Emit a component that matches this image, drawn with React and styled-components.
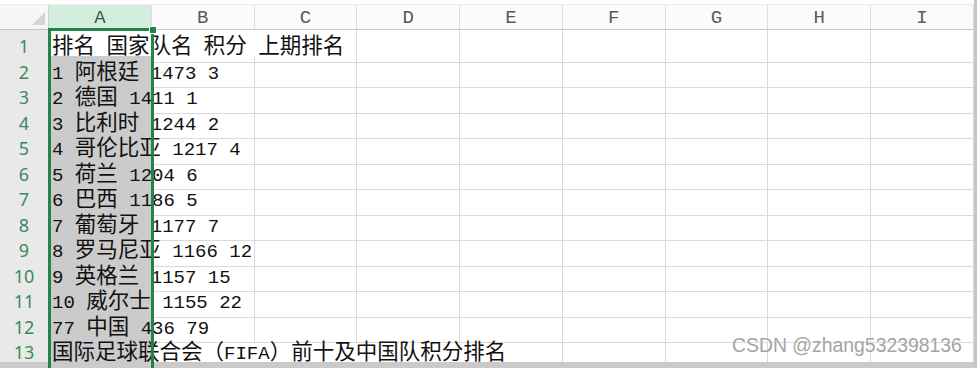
import React from "react";
import styled, { createGlobalStyle } from "styled-components";

const GlobalStyle = createGlobalStyle`
  html, body { margin: 0; padding: 0; background: #fff; }
  body { overflow: hidden; }
`;

const COLS = ["A", "B", "C", "D", "E", "F", "G", "H", "I"];
const ROW_H = 25.5;

const rows = [
  { text: "排名 国家队名 积分 上期排名", covered: ["B"] },
  { text: "1 阿根廷 1473 3" },
  { text: "2 德国 1411 1" },
  { text: "3 比利时 1244 2" },
  { text: "4 哥伦比亚 1217 4" },
  { text: "5 荷兰 1204 6" },
  { text: "6 巴西 1186 5" },
  { text: "7 葡萄牙 1177 7" },
  { text: "8 罗马尼亚 1166 12" },
  { text: "9 英格兰 1157 15" },
  { text: "10 威尔士 1155 22" },
  { text: "77 中国 436 79" },
  { text: "国际足球联合会（FIFA）前十及中国队积分排名", covered: ["B", "C", "D"] },
];

const Sheet = styled.div`
  position: relative;
  width: 977px;
  height: 368px;
  overflow: hidden;
  display: flex;
  background: #fff;
`;

const Main = styled.div`
  width: 974px;
  display: flex;
  flex-direction: column;
`;

const RightEdge = styled.div`
  width: 3px;
  background: #c6c6c6;
`;

const TopGap = styled.div`
  height: 5px;
  box-sizing: border-box;
  border-bottom: 1px solid #ececec;
  background: #fff;
`;

const GridRow = styled.div`
  display: grid;
  grid-template-columns: 49px repeat(9, 102.75px);
  height: ${(p) => p.$h}px;
  flex: none;
`;

const Corner = styled.div`
  box-sizing: border-box;
  background: #f6f6f6;
  border-right: 1px solid #d4d4d4;
  border-bottom: 1px solid #c4c4c4;
  display: flex;
  align-items: flex-end;
  justify-content: flex-end;
  padding: 0 3px 4px 0;
`;

const ColHead = styled.div`
  box-sizing: border-box;
  background: ${(p) => (p.$active ? "#d4eedd" : "#fbfbfb")};
  border-right: 1px solid #dcdcdc;
  border-bottom: 1px solid #c4c4c4;
  display: flex;
  align-items: center;
  justify-content: center;
  font-family: "Liberation Mono", "Courier New", monospace;
  font-size: 19px;
  color: ${(p) => (p.$active ? "#3d5a48" : "#5a5a5a")};
  padding-top: 2px;
`;

const RowHead = styled.div`
  box-sizing: border-box;
  background: #e9e9e9;
  border-right: 1px solid #c8c8c8;
  border-bottom: 1px solid #d2d2d2;
  display: flex;
  align-items: center;
  justify-content: center;
  font-family: "Noto Sans", "Open Sans", sans-serif;
  font-size: 18px;
  color: #3b8a5f;
  padding-top: 1px;
`;

const Cell = styled.div`
  box-sizing: border-box;
  background: ${(p) => p.$bg || "transparent"};
  border-right: 1px solid ${(p) => (p.$covered ? "transparent" : "#dadada")};
  border-bottom: 1px solid #dadada;
  white-space: pre;
  overflow: visible;
  font-family: "Noto Sans CJK SC", sans-serif;
  font-size: 21.5px;
  line-height: ${ROW_H}px;
  color: #111;
  padding-left: 3px;
  padding-top: 1px;
`;

const TextRun = styled.span`
  position: relative;
  z-index: 1;
`;

const Latin = styled.span`
  font-family: "Liberation Mono", "Courier New", monospace;
  font-size: 19px;
`;

const BottomBar = styled.div`
  flex: 1;
  background: #cacaca;
`;

const Selection = styled.div`
  position: absolute;
  left: 48px;
  top: 28px;
  width: 106px;
  height: 345px;
  box-sizing: border-box;
  border: 3px solid #22834b;
  z-index: 2;
  pointer-events: none;
`;

const Handle = styled.div`
  position: absolute;
  left: 149px;
  top: 26px;
  width: 6px;
  height: 6px;
  background: #22834b;
  border: 1px solid #fff;
  z-index: 3;
`;

const Watermark = styled.div`
  position: absolute;
  left: 732px;
  top: 334px;
  font-family: "Liberation Sans", Arial, sans-serif;
  font-size: 19.4px;
  color: #a4a4a4;
  white-space: nowrap;
  z-index: 4;
  text-shadow: 0 0 1px #fff;
`;

const runs = (text) =>
  text
    .split(/([\x00-\x7f]+)/)
    .filter(Boolean)
    .map((part, i) =>
      /^[\x00-\x7f]+$/.test(part) ? (
        <Latin key={i}>{part}</Latin>
      ) : (
        <span key={i}>{part}</span>
      )
    );

export default function App() {
  return (
    <>
      <GlobalStyle />
      <Sheet>
        <Main>
          <TopGap />
          <GridRow $h={25}>
            <Corner>
              <svg width="13" height="13" viewBox="0 0 13 13">
                <polygon points="13,0 13,13 0,13" fill="#d3d3d3" />
              </svg>
            </Corner>
            {COLS.map((c) => (
              <ColHead key={c} $active={c === "A"}>
                {c}
              </ColHead>
            ))}
          </GridRow>
          {rows.map((r, i) => (
            <GridRow key={i} $h={ROW_H}>
              <RowHead>{i + 1}</RowHead>
              {COLS.map((c) =>
                c === "A" ? (
                  <Cell key={c} $bg={i === 0 ? "#fff" : "#cbcbcb"}>
                    <TextRun>{runs(r.text)}</TextRun>
                  </Cell>
                ) : (
                  <Cell key={c} $covered={r.covered && r.covered.includes(c)} />
                )
              )}
            </GridRow>
          ))}
          <BottomBar />
        </Main>
        <RightEdge />
        <Selection />
        <Handle />
        <Watermark>CSDN @zhang532398136</Watermark>
      </Sheet>
    </>
  );
}
